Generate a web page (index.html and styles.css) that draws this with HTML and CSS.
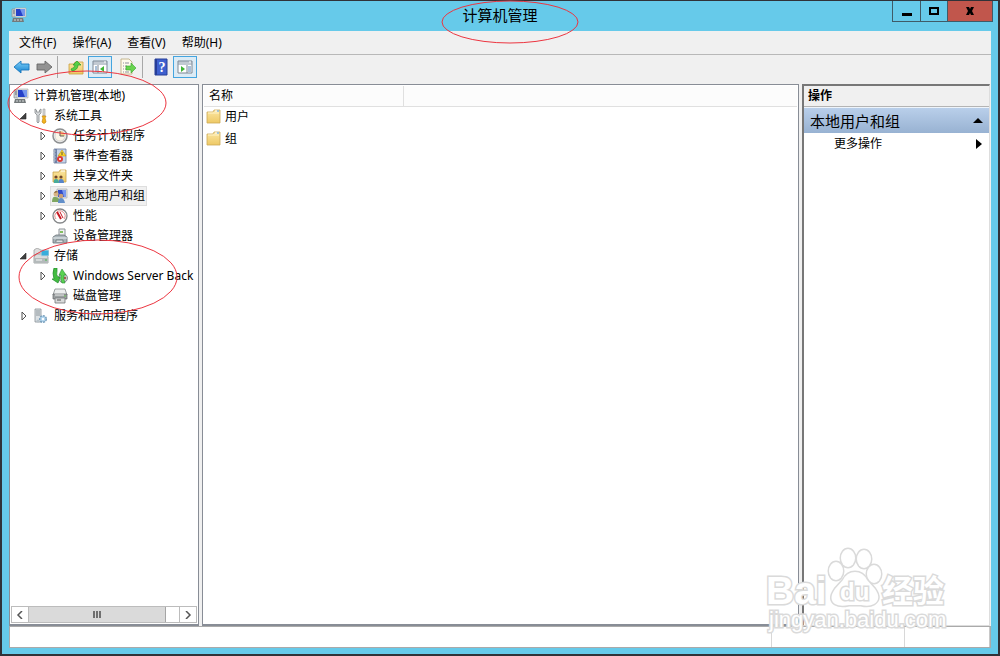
FILE: index.html
```html
<!DOCTYPE html>
<html lang="zh-CN">
<head>
<meta charset="utf-8">
<title>计算机管理</title>
<link rel="stylesheet" href="styles.css">
</head>
<body>
<svg class="defs" aria-hidden="true">
  <defs>
    <linearGradient id="arrowBlue" x1="0" y1="0" x2="0" y2="1"><stop offset="0" stop-color="#7fd0f8"/><stop offset="1" stop-color="#1583d0"/></linearGradient>
    <linearGradient id="folderFill" x1="0" y1="0" x2="0" y2="1"><stop offset="0" stop-color="#fbe6a2"/><stop offset="1" stop-color="#eec965"/></linearGradient>
    <symbol id="closed" viewBox="0 0 12 12"><path d="M4 2v8l4-4z" fill="#fff" stroke="#505050"/></symbol>
    <symbol id="open" viewBox="0 0 12 12"><path d="M8 3v6H2z" fill="#404040" stroke="#262626" stroke-width=".6"/></symbol>
    <symbol id="computer" viewBox="0 0 16 16">
      <path d="M1 2h4v8H1z" fill="#c9ced0" stroke="#8b9294" stroke-width=".7"/><path d="M2 4h2M2 6h2" stroke="#667"/>
      <path d="M4 1h11v9H4z" fill="#e0e2e2" stroke="#a2a8aa" stroke-width=".6"/><path d="M5 2h9v7H5z" fill="#2540c8"/><path d="M9 2h5v7h-2z" fill="#7596ee"/>
      <path d="M2 11h10l1 4H1z" fill="#73797b"/><path d="M3 13h8" stroke="#d8dcdc" stroke-dasharray="2 1"/>
    </symbol>
    <symbol id="tools" viewBox="0 0 16 16">
      <path d="M2 1v4l2 2v7q1 2 2 0V7l2-2V1L6.500 2v2h-3V2z" fill="#d5d8da" stroke="#858a8d" stroke-width=".8"/>
      <path d="M10 1h2v7h-2z" fill="#ddd" stroke="#888" stroke-width=".5"/><path d="M9 8h4l-1 2 1 4q-2 3-4 0l1-4z" fill="#f3b51e" stroke="#c88716" stroke-width=".7"/>
    </symbol>
    <symbol id="clock" viewBox="0 0 16 16"><circle cx="8" cy="8" r="7" fill="#eee" stroke="#8d8f91" stroke-width="1.500"/><circle cx="8" cy="8" r="5" fill="#faf6e8" stroke="#bbb" stroke-width=".5"/><path d="M8 8V3a5 5 0 0 1 5 5z" fill="#f5d38c"/><path d="M8 3v5h4" fill="none" stroke="#5c5c5c"/></symbol>
    <symbol id="events" viewBox="0 0 16 16"><path d="M2 1h12v14H2z" fill="#c5d4ea" stroke="#6c7c9a" stroke-width=".8"/><path d="M3 1h2v14H3z" fill="#6f81a6"/><path d="M1 3h3M1 6h3M1 9h3M1 12h3" stroke="#aab4c4"/><path d="M10 2l4 6H6z" fill="#ffd72e" stroke="#b58b00" stroke-width=".5"/><path d="M10 4v3" stroke="#333" stroke-width=".8"/><circle cx="8" cy="11" r="3" fill="#dd3b35"/><path d="M7 10l2 2m0-2-2 2" stroke="#fff" stroke-width=".8"/></symbol>
    <symbol id="share" viewBox="0 0 16 16"><path d="M1 4h6l1-2h6v12H1z" fill="url(#folderFill)" stroke="#c9a34a" stroke-width=".8"/><path d="M9 3h4" stroke="#fff"/><circle cx="4" cy="9" r="1.600" fill="#71472b"/><circle cx="9" cy="9" r="1.600" fill="#71472b"/><path d="M2 15q-1-4 2-4t3 4z" fill="#48ac9b"/><path d="M7 15q-1-4 2-4t3 4z" fill="#5785c9"/></symbol>
    <symbol id="users" viewBox="0 0 16 16"><path d="M5 1h10v9H5z" fill="#dfe3e6" stroke="#a6abad" stroke-width=".7"/><path d="M6 2h8v7H6z" fill="#304bc9"/><path d="M10 2h4v7h-2z" fill="#7998ef"/><circle cx="4" cy="6" r="2.500" fill="#d7b484"/><path d="M2 5q2-4 4-1l-3 1z" fill="#937046"/><path d="M0 14q0-6 4-5t4 5z" fill="#7fa761"/><circle cx="9" cy="8" r="2.300" fill="#c9a078"/><path d="M6 15q0-5 3-5t4 5z" fill="#628fc9"/></symbol>
    <symbol id="perf" viewBox="0 0 16 16"><circle cx="8" cy="8" r="7" fill="#fff" stroke="#858789" stroke-width="1.300"/><path d="M4 11a5 5 0 1 1 8 0" fill="none" stroke="#e08a88"/><path d="M5 4l4 7" stroke="#c71924" stroke-width="2"/><path d="M8 4l3 6" stroke="#c71924"/></symbol>
    <symbol id="device" viewBox="0 0 16 16"><path d="M7 1h6v8H7z" fill="#f0f1f1" stroke="#8c9397"/><path d="M8 3h3v2H8z" fill="#82bf61"/><path d="M1 9l3-2h8l3 2v6H1z" fill="#a9b4b9" stroke="#697277" stroke-width=".8"/><path d="M1 10h14" stroke="#e9eef0"/><path d="M4 14v-2h7v2" fill="#dce1e3" stroke="#5d6468" stroke-width=".7"/></symbol>
    <symbol id="storage" viewBox="0 0 16 16"><path d="M1 2l3-2 4 2v5H1z" fill="#ddd" stroke="#939393" stroke-width=".7"/><path d="M1 9l2-3h9l3 3v6H1z" fill="#dadcdc" stroke="#8d9293" stroke-width=".8"/><path d="M1 10h14v5H1z" fill="#b4babb"/><path d="M8 2h8v6H8z" fill="#38addb" stroke="#c3d3da"/><path d="M3 12h6" stroke="#f7f7f7"/><path d="M12 12h2" stroke="#45b948"/></symbol>
    <symbol id="backup" viewBox="0 0 16 16"><circle cx="11" cy="10" r="4.500" fill="#cbd0d2" stroke="#868b8d"/><circle cx="13" cy="10" r="1.200" fill="#a65b4b"/><path d="M2 0h3v3q-1 4 1 6h2l-2 6-6-4h2Q0 5 2 0z" fill="#42bd40" stroke="#218a2b" stroke-width=".7"/><path d="M10 15q-2-4-1-8H7l3-6 4 6h-2q-1 4 1 8z" fill="#5bd253" stroke="#238e2d" stroke-width=".6"/></symbol>
    <symbol id="disk" viewBox="0 0 16 16"><path d="M3 1h10l2 6H1z" fill="#eceeee" stroke="#858a8b" stroke-width=".8"/><path d="M1 6h14v5H1z" fill="#9ba0a1" stroke="#616667" stroke-width=".7"/><path d="M3 7h9" stroke="#eee"/><path d="M3 10h10v5H3z" fill="#d8dada" stroke="#717576" stroke-width=".8"/><path d="M5 12h4" stroke="#555"/><path d="M12 8h2" stroke="#6abf51"/></symbol>
    <symbol id="services" viewBox="0 0 16 16"><path d="M2 1h6v13H2z" fill="#dce1e4" stroke="#899196" stroke-width=".8"/><path d="M3 3h4M3 5h4M3 7h4" stroke="#8d969b"/><circle cx="10" cy="11" r="3.300" fill="#afd3ec" stroke="#7aa0bd" stroke-width="1.500" stroke-dasharray="2 1"/><circle cx="10" cy="11" r="1.200" fill="#fff"/><circle cx="5" cy="13" r="1.600" fill="#b7c2c9"/></symbol>
    <symbol id="folder" viewBox="0 0 16 16"><path d="M1 3h6l1-2h6v13H1z" fill="url(#folderFill)" stroke="#cda957" stroke-width=".8"/><path d="M9 2h4" stroke="#fff"/><path d="M11 2h2" stroke="#4d9bdd"/><path d="M2 4h11" stroke="#fff3c8"/></symbol>
  </defs>
</svg>

<div class="window">
  <header class="titlebar">
    <svg class="icon title-icon"><use href="#computer"/></svg>
    <h1 class="title">计算机管理</h1>
    <div class="controls">
      <button class="control" aria-label="最小化"><svg width="12" height="12"><path d="M1 8h10v3H1z"/></svg></button>
      <button class="control control-max" aria-label="最大化"><svg width="12" height="12"><path d="M2 3h8v6H2z" fill="none" stroke="#000" stroke-width="2"/></svg></button>
      <button class="control control-close" aria-label="关闭"><svg width="12" height="12"><path d="M2 2h3l1 2 1-2h3L8 6l2 4H7L6 8l-1 2H2l2-4z"/></svg></button>
    </div>
  </header>

  <div class="client">
    <nav class="menubar">
      <button>文件(F)</button><button>操作(A)</button><button>查看(V)</button><button>帮助(H)</button>
    </nav>
    <div class="toolbar">
      <button aria-label="后退" class="tool"><svg class="icon"><path d="M0 8l7-6v3h8v6H7v3z" fill="url(#arrowBlue)" stroke="#1677bd" stroke-width=".9"/></svg></button>
      <button aria-label="前进" class="tool"><svg class="icon"><path d="M16 8L9 2v3H1v6h8v3z" fill="#929292" stroke="#686868" stroke-width=".9"/></svg></button>
      <span class="separator"></span>
      <button aria-label="上移一级" class="tool tool-wide"><svg class="icon"><path d="M1 5h5l1-2h8v12H1z" fill="url(#folderFill)" stroke="#c99e3e" stroke-width=".8"/><path d="M3 10q4-1 4-4H5l4-4 4 4h-3q0 5-6 6z" fill="#56cf45" stroke="#269b28" stroke-width=".7"/></svg></button>
      <button aria-label="显示/隐藏控制台树" class="tool toggled"><svg class="icon"><path d="M1 2h14v12H1z" fill="#fff" stroke="#7c8793"/><path d="M1 3h14M1 5h14" stroke="#8594a5"/><path d="M12 3h2" stroke="#fff"/><path d="M6 6v8" stroke="#7c8793"/><path d="M3 8h2M3 10h2M3 12h2" stroke="#5783b4"/><path d="M12 7v6l-4-3z" fill="#3eb534"/></svg></button>
      <button aria-label="导出列表" class="tool tool-wide"><svg class="icon"><path d="M1 0h8l3 3v12H1z" fill="#fffbed" stroke="#b9a87a" stroke-width=".8"/><path d="M3 4h6M3 7h4M3 10h4M3 13h6" stroke="#8f8f9e" stroke-dasharray="1 1 5 0"/><path d="M6 7h5V4l5 5-5 5v-3H6z" fill="#69d34e" stroke="#34a52e" stroke-width=".6"/></svg></button>
      <span class="separator"></span>
      <button aria-label="帮助" class="tool tool-wide"><svg class="icon"><path d="M2 0h12v16H2z" fill="#3e60cf" stroke="#263e98"/><path d="M2 0h2v16H2z" fill="#263e98"/><text x="9" y="13" text-anchor="middle" class="help-mark">?</text></svg></button>
      <button aria-label="显示/隐藏操作窗格" class="tool toggled"><svg class="icon"><path d="M1 2h14v12H1z" fill="#fff" stroke="#7c8793"/><path d="M1 3h14M1 5h14" stroke="#8594a5"/><path d="M12 3h2" stroke="#fff"/><path d="M10 6v8" stroke="#7c8793"/><path d="M11 8h3M11 10h3M11 12h3" stroke="#5783b4"/><path d="M4 7v6l4-3z" fill="#3eb534"/></svg></button>
    </div>

    <main class="panes">
      <section class="pane tree-pane">
        <ul class="tree">
          <li class="node root"><span class="label"><svg class="icon"><use href="#computer"/></svg>计算机管理(本地)</span></li>
          <li class="node branch"><button class="twist" aria-label="折叠"><svg><use href="#open"/></svg></button><span class="label"><svg class="icon"><use href="#tools"/></svg>系统工具</span></li>
          <li class="node leaf"><button class="twist" aria-label="展开"><svg><use href="#closed"/></svg></button><span class="label"><svg class="icon"><use href="#clock"/></svg>任务计划程序</span></li>
          <li class="node leaf"><button class="twist" aria-label="展开"><svg><use href="#closed"/></svg></button><span class="label"><svg class="icon"><use href="#events"/></svg>事件查看器</span></li>
          <li class="node leaf"><button class="twist" aria-label="展开"><svg><use href="#closed"/></svg></button><span class="label"><svg class="icon"><use href="#share"/></svg>共享文件夹</span></li>
          <li class="node leaf"><button class="twist" aria-label="展开"><svg><use href="#closed"/></svg></button><span class="label selected"><svg class="icon"><use href="#users"/></svg>本地用户和组</span></li>
          <li class="node leaf"><button class="twist" aria-label="展开"><svg><use href="#closed"/></svg></button><span class="label"><svg class="icon"><use href="#perf"/></svg>性能</span></li>
          <li class="node leaf"><span class="twist"></span><span class="label"><svg class="icon"><use href="#device"/></svg>设备管理器</span></li>
          <li class="node branch"><button class="twist" aria-label="折叠"><svg><use href="#open"/></svg></button><span class="label"><svg class="icon"><use href="#storage"/></svg>存储</span></li>
          <li class="node leaf"><button class="twist" aria-label="展开"><svg><use href="#closed"/></svg></button><span class="label"><svg class="icon"><use href="#backup"/></svg>Windows Server Back</span></li>
          <li class="node leaf"><span class="twist"></span><span class="label"><svg class="icon"><use href="#disk"/></svg>磁盘管理</span></li>
          <li class="node branch"><button class="twist" aria-label="展开"><svg><use href="#closed"/></svg></button><span class="label"><svg class="icon"><use href="#services"/></svg>服务和应用程序</span></li>
        </ul>
        <div class="scrollbar">
          <button class="scroll-arrow" aria-label="向左滚动"><svg width="8" height="8"><path d="M6 0L2 4l4 4" fill="none" stroke="#555" stroke-width="1.500"/></svg></button>
          <div class="track"><div class="thumb"><i></i><i></i><i></i></div></div>
          <button class="scroll-arrow" aria-label="向右滚动"><svg width="8" height="8"><path d="M2 0l4 4-4 4" fill="none" stroke="#555" stroke-width="1.500"/></svg></button>
        </div>
      </section>

      <section class="pane list-pane">
        <table class="list">
          <thead><tr><th class="name-column">名称</th><th></th></tr></thead>
          <tbody>
            <tr><td colspan="2"><span class="entry"><svg class="icon"><use href="#folder"/></svg>用户</span></td></tr>
            <tr><td colspan="2"><span class="entry"><svg class="icon"><use href="#folder"/></svg>组</span></td></tr>
          </tbody>
        </table>
      </section>

      <aside class="pane action-pane">
        <h2 class="action-title">操作</h2>
        <button class="action-group">本地用户和组<svg width="10" height="6"><path d="M0 5h10L5 0z"/></svg></button>
        <button class="action-item">更多操作<svg width="6" height="10"><path d="M0 0v10l6-5z"/></svg></button>
      </aside>
    </main>

    <footer class="status"><span class="status-main"></span><span class="status-cell"></span><span class="status-end"></span></footer>
  </div>
</div>

<svg class="marks" width="600" height="330" aria-hidden="true">
  <ellipse cx="510" cy="22" rx="68" ry="21"/>
  <ellipse cx="87" cy="103" rx="79" ry="32"/>
  <ellipse cx="98" cy="277" rx="79" ry="37"/>
</svg>

<svg class="watermark" width="190" height="90" aria-hidden="true">
  <g class="outline">
    <text x="5" y="60" class="wm-brand">Bai</text>
    <ellipse cx="75" cy="27" rx="7" ry="9"/>
    <ellipse cx="87" cy="14" rx="7" ry="9"/>
    <ellipse cx="103" cy="15" rx="7" ry="9"/>
    <ellipse cx="113" cy="30" rx="7" ry="9"/>
    <path d="M94 28q8 0 12 8l8 9q7 10-1 15-5 3-13 1h-12q-9 2-14-1-7-5 0-15l8-9q4-8 12-8z"/>
    <text x="79" y="56" class="wm-du">du</text>
    <text x="121" y="58" class="wm-cjk">经验</text>
    <text x="8" y="83" class="wm-url">jingyan.baidu.com</text>
  </g>
</svg>
</body>
</html>
```

FILE: styles.css
```css
* { box-sizing: border-box; }
body {
  margin: 0;
  min-height: 100vh;
  display: flex;
  padding: 1px 2px 2px;
  position: relative;
  overflow: hidden;
  background: #303238;
  color: #000;
  font: 12px/20px "Noto Sans", "Noto Sans CJK SC", sans-serif;
}
button {
  font: inherit;
  color: inherit;
  background: none;
  border: 0;
  padding: 0;
  white-space: nowrap;
}
.defs { position: absolute; width: 0; height: 0; }
.icon { width: 16px; height: 16px; flex: none; overflow: visible; }

.window {
  flex: 1;
  display: flex;
  flex-direction: column;
  padding: 0 7px 6px;
  background: #66caea;
}
.titlebar {
  display: grid;
  grid-template-columns: 1fr auto 1fr;
  align-items: start;
  height: 30px;
}
.title-icon { margin: 6px 0 0 2px; }
.title { margin: 3px 0 0; font-size: 15px; line-height: 22px; font-weight: 400; }
.controls {
  justify-self: end;
  display: flex;
  height: 21px;
  margin-right: -2px;
  border: 1px solid #3f5b68;
  border-top: 0;
}
.control { width: 27px; display: grid; place-items: center; }
.control-max { border-left: 1px solid #3f5b68; }
.control-close { width: 45px; background: #c1564c; border-left: 1px solid #3f5b68; }

.client { flex: 1; display: flex; flex-direction: column; background: #f0f0f0; }
.menubar {
  display: flex;
  gap: 16px;
  height: 24px;
  padding: 0 10px;
  border-bottom: 1px solid #b8b8b8;
}
.toolbar { display: flex; align-items: flex-start; height: 29px; padding: 1px 2px; }
.tool { width: 22px; height: 22px; display: grid; place-items: center; }
.tool-wide { width: 28px; padding-left: 3px; }
.toggled { width: 24px; background: #dcebf5; border: 1px solid #45a5df; }
.separator { width: 1px; height: 22px; background: #a8a8a8; margin: 0 2px; }
.help-mark { fill: #fff; font: bold 14px "Liberation Serif", serif; }

.panes { flex: 1; display: grid; grid-template-columns: 190px 1fr 189px; gap: 3px; }
.pane { min-width: 0; background: #fff; border: 1px solid #888d96; border-bottom-width: 2px; }
.tree-pane { display: flex; flex-direction: column; padding: 1px; overflow: hidden; }
.tree { flex: 1; list-style: none; margin: 0; padding: 0; }
.node { display: flex; align-items: center; height: 20px; white-space: nowrap; }
.branch { padding-left: 7px; }
.leaf { padding-left: 26px; }
.twist { width: 12px; height: 12px; display: grid; flex: none; margin-right: 1px; }
.twist svg { width: 12px; height: 12px; }
.label { display: flex; align-items: center; gap: 5px; height: 20px; padding: 0 2px; }
.selected { background: #f0f0f0; outline: 1px solid #dedede; outline-offset: -1px; }

.scrollbar { display: flex; height: 17px; border: 1px solid #bcbcbc; }
.scroll-arrow { width: 16px; display: grid; place-items: center; }
.track { flex: 1; border: 1px solid #bcbcbc; border-width: 0 1px; }
.thumb {
  width: 91%;
  height: 15px;
  display: flex;
  justify-content: center;
  align-items: center;
  gap: 1px;
  background: #dadada;
  border-right: 1px solid #a5a5a5;
}
.thumb i { width: 2px; height: 7px; background: #707070; }

.list-pane { padding: 1px; }
.list { width: 100%; border-collapse: collapse; table-layout: fixed; }
.list th {
  height: 20px;
  padding: 0 5px;
  text-align: left;
  font-weight: 400;
  line-height: 19px;
  background: #fcfcfc;
  border-bottom: 1px solid #e0e0e0;
}
.list .name-column { width: 199px; border-right: 1px solid #e0e0e0; }
.list td { height: 22px; padding: 0 2px; }
.entry { display: flex; align-items: center; gap: 3px; }

.action-pane {
  margin-right: 1px;
  border: 2px solid #777;
  border-right: 1px solid #ddd;
  border-bottom: 1px solid #ddd;
}
.action-title {
  margin: 0;
  height: 21px;
  padding: 0 4px;
  font-size: 12px;
  font-weight: 700;
  line-height: 20px;
  background: #f0f0f0;
  border-bottom: 1px solid #b4b4b4;
}
.action-group, .action-item { display: flex; align-items: center; justify-content: space-between; width: 100%; }
.action-group {
  height: 26px;
  padding: 0 6px;
  font-size: 15px;
  background: linear-gradient(#b9cfea, #98b2d2);
  border-top: 1px solid #eef4fb;
}
.action-item { height: 22px; padding: 0 7px 0 30px; }

.status { display: flex; height: 22px; background: #fff; border: 1px solid #aaa; }
.status-main { flex: 1; }
.status-cell { width: 134px; border: 1px solid #d8d8d8; border-width: 0 1px; }
.status-end { width: 85px; border-right: 1px solid #c8c8c8; }

.marks { position: absolute; left: 0; top: 0; pointer-events: none; }
.marks ellipse { fill: none; stroke: #ec3540; stroke-width: 1; }
.watermark { position: absolute; right: 49px; bottom: 22px; pointer-events: none; overflow: visible; }
.outline > * { fill: #fff; stroke: #dadada; stroke-width: 3; paint-order: stroke; }
.wm-brand { font: bold 39px "Liberation Sans", sans-serif; }
.wm-du { font: bold 24px "Liberation Sans", sans-serif; }
.wm-cjk { font: bold 31px "Noto Sans CJK SC", sans-serif; }
.wm-url { font: 22px "Liberation Sans", sans-serif; }
```
